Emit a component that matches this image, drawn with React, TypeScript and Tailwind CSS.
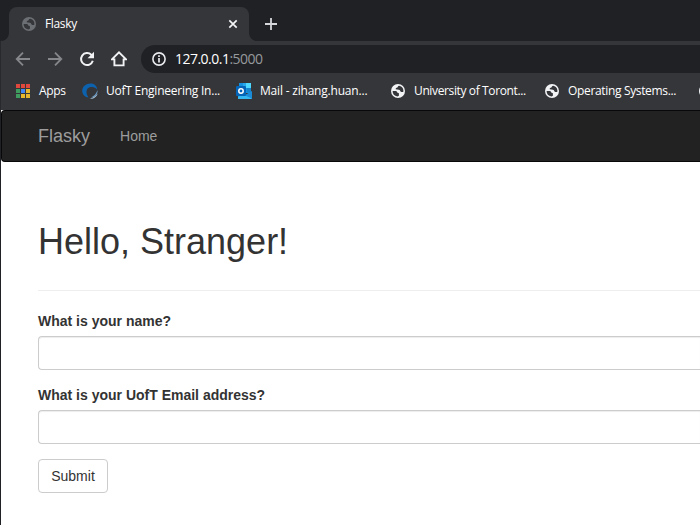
import React from "react";

function Globe({ color = "#f1f3f4", land = "#35363a" }: { color?: string; land?: string }) {
  return (
    <svg width="14" height="14" viewBox="0 0 14 14" className="shrink-0">
      <circle cx="7" cy="7" r="7" fill={color} />
      <path
        d="M1.600 7.100h2.900c1 0 1.600.7 1.700 1.500l1.700.6v2.500l-1.500.7A5.400 5.400 0 0 1 1.600 7.100ZM8.200 1.700C6.900 2.100 6.900 2.900 6.400 3.500 5.300 3.700 4.600 4.300 4.700 5.300L7.900 5.700C9 5.800 9.100 6.500 9.300 7.100 9.500 7.900 10.100 8.100 10.900 8.100L12.300 7.900A5.400 5.400 0 0 0 10.100 2.600Z"
        fill={land}
      />
    </svg>
  );
}

function AppsGrid() {
  const colors = ["#e0483e", "#e0483e", "#e0483e", "#3f9d60", "#4285f4", "#e8b62c", "#3f9d60", "#e8b62c", "#e8b62c"];
  return (
    <div className="grid h-[14px] w-[14px] shrink-0 grid-cols-3 gap-[1px]">
      {colors.map((c, i) => (
        <i key={i} className="h-[4px] w-[4px]" style={{ background: c }} />
      ))}
    </div>
  );
}

function Swirl() {
  return (
    <svg width="16" height="17" viewBox="0 0 16 17" fill="none" className="shrink-0">
      <path d="M7 .8C11.500-.2 15.200 2.800 15.200 6.800 13.500 4 10.800 3.600 8.300 4.100 3.800 5.200 3.300 10.600 6.600 14.500 3 14.200.2 11.500.2 7.700.2 4.200 3.200 1.400 7 .8Z" fill="#0d62ae" />
      <path d="M15.500 7c.5 4.300-2.400 7.400-6.700 7.500 3.300-1.300 5.500-3.800 6.700-7.500Z" fill="#6c9dc7" />
      <path d="M15.700 10.500c-1 3.500-4.300 5.800-8.200 5.200 3.500-.7 6.200-2.500 8.200-5.200Z" fill="#a8c6df" />
    </svg>
  );
}

function Outlook() {
  return (
    <svg width="16" height="16" viewBox="0 0 16 16" className="shrink-0">
      <path d="M3 0h12v10H3Z" fill="#1490df" />
      <path d="M7 0h4v4H7Z" fill="#28a8ea" />
      <path d="M10 0h5v5h-5Z" fill="#50d9ff" />
      <path d="M11 5h4v4h-4Z" fill="#1683ca" />
      <path d="M2 8l7 4 7-4v7a1 1 0 0 1-1 1H3a1 1 0 0 1-1-1Z" fill="#1b8bd8" />
      <path d="M2 13.500l6-1.500 8 3.500-1 .5H2Z" fill="#35b8f1" />
      <rect y="3" width="10" height="10" rx="1" fill="#0364b8" />
      <circle cx="5" cy="8" r="2.200" stroke="#fff" strokeWidth="1.500" fill="none" />
    </svg>
  );
}

function TabStrip() {
  return (
    <div className="flex h-[41px] items-end bg-[#202124] pl-px">
      <svg width="8" height="8" viewBox="0 0 8 8"><path d="M8 0v8H0a8 8 0 0 0 8-8Z" fill="#35363a" /></svg>
      <div className="flex h-[34px] w-[240px] items-center rounded-t-lg bg-[#35363a] pl-[13px] pr-[11px]">
        <Globe color="#6c6f73" />
        <span className="ml-[9px] flex-1 text-[12px] tracking-[-0.35px] text-white">Flasky</span>
        <svg width="10" height="10" viewBox="0 0 10 10"><path d="M1.300 1.300l7.400 7.400M8.700 1.300L1.300 8.700" stroke="#f1f3f4" strokeWidth="1.700" /></svg>
      </div>
      <svg width="8" height="8" viewBox="0 0 8 8"><path d="M0 0v8h8a8 8 0 0 1-8-8Z" fill="#35363a" /></svg>
      <svg className="mb-[11px] ml-[8px]" width="12" height="12" viewBox="0 0 12 12"><path d="M6 0v12M0 6h12" stroke="#d5d7da" strokeWidth="1.800" /></svg>
    </div>
  );
}

function Toolbar() {
  return (
    <div className="flex h-8 items-end pl-[14px]">
      <div className="flex h-7 w-[126px] shrink-0 items-center gap-4">
        <svg width="16" height="16" viewBox="0 0 16 16" fill="none" stroke="#85878a" strokeWidth="1.800"><path d="M15 8H2M8 1.700L1.700 8 8 14.300" /></svg>
        <svg width="16" height="16" viewBox="0 0 16 16" fill="none" stroke="#85878a" strokeWidth="1.800"><path d="M1 8h13M8 1.700L14.300 8 8 14.300" /></svg>
        <svg width="16" height="16" viewBox="0 0 16 16" fill="none"><path d="M13.800 9.800A6 6 0 1 1 12.300 3.800L13.500 5" stroke="#f1f3f4" strokeWidth="2" /><path d="M15 .8v6.400H8.600Z" fill="#f1f3f4" /></svg>
        <svg width="16" height="16" viewBox="0 0 16 16" fill="none"><path d="M.9 8.400L8 1.400l7.100 7H12.600v6H3.400v-6Z" stroke="#f1f3f4" strokeWidth="1.900" /></svg>
      </div>
      <div className="flex h-7 flex-1 items-center rounded-l-full bg-[#202124] pl-[11px]">
        <svg width="14" height="14" viewBox="0 0 14 14"><circle cx="7" cy="7" r="6.100" fill="none" stroke="#e8eaed" strokeWidth="1.600" /><path d="M7 6v4.500M7 3.300v1.600" stroke="#e8eaed" strokeWidth="1.700" /></svg>
        <span className="-mt-px ml-[9px] text-[14px] tracking-[-0.52px] text-white">127.0.0.1<span className="text-[#96999d]">:5000</span></span>
      </div>
    </div>
  );
}

function Bookmarks() {
  return (
    <div className="flex h-9 items-center overflow-hidden whitespace-nowrap pl-[15px] text-[12px] text-white">
      <AppsGrid />
      <span className="ml-[9px] w-[43px] shrink-0 tracking-[-0.3px]">Apps</span>
      <Swirl />
      <span className="ml-2 w-[130px] shrink-0 tracking-[-0.24px]">UofT Engineering In...</span>
      <Outlook />
      <span className="ml-2 w-[131px] shrink-0 tracking-[-0.2px]">Mail - zihang.huan...</span>
      <Globe />
      <span className="ml-[9px] w-[131px] shrink-0 tracking-[-0.37px]">University of Toront...</span>
      <Globe />
      <span className="ml-[9px] w-[131px] shrink-0 tracking-[-0.34px]">Operating Systems...</span>
      <Globe />
    </div>
  );
}

function Field({ label }: { label: string }) {
  return (
    <label className="mb-[15px] block text-sm font-bold">
      <span className="mb-[5px] block">{label}</span>
      <input className="block h-[34px] w-full rounded-l border border-r-0 border-[#ccc] bg-white px-3 font-normal shadow-[inset_0_1px_1px_rgba(0,0,0,0.075)] outline-none" />
    </label>
  );
}

export default function App() {
  return (
    <div className="h-[525px] w-[700px] overflow-hidden bg-white">
      <div className="flex h-[525px] flex-col border-l border-[#202124]">
        <header className="-ml-px h-[110px] shrink-0 border-l border-[#28292c] bg-[#35363a] font-['Open_Sans',sans-serif]">
          <div className="-ml-px"><TabStrip /></div>
          <Toolbar />
          <Bookmarks />
        </header>
        <div className="font-['Liberation_Sans',Arial,sans-serif] text-[#333]">
          <nav className="flex h-[52px] items-center rounded-l border border-r-0 border-[#080808] bg-[#222] pl-9 text-[#9d9d9d]">
            <a className="text-[18px] leading-5">Flasky</a>
            <a className="ml-[30px] text-sm leading-5">Home</a>
          </nav>
          <main className="pl-[37px]">
            <h1 className="mb-[29px] border-b border-[#eee] pb-[29px] pt-[60px] text-[36px] leading-[39px]">Hello, Stranger!</h1>
            <form className="-mt-[9px]">
              <Field label="What is your name?" />
              <Field label="What is your UofT Email address?" />
              <button type="button" className="block h-[34px] w-[70px] rounded border border-[#ccc] bg-white text-sm">Submit</button>
            </form>
          </main>
        </div>
      </div>
    </div>
  );
}
